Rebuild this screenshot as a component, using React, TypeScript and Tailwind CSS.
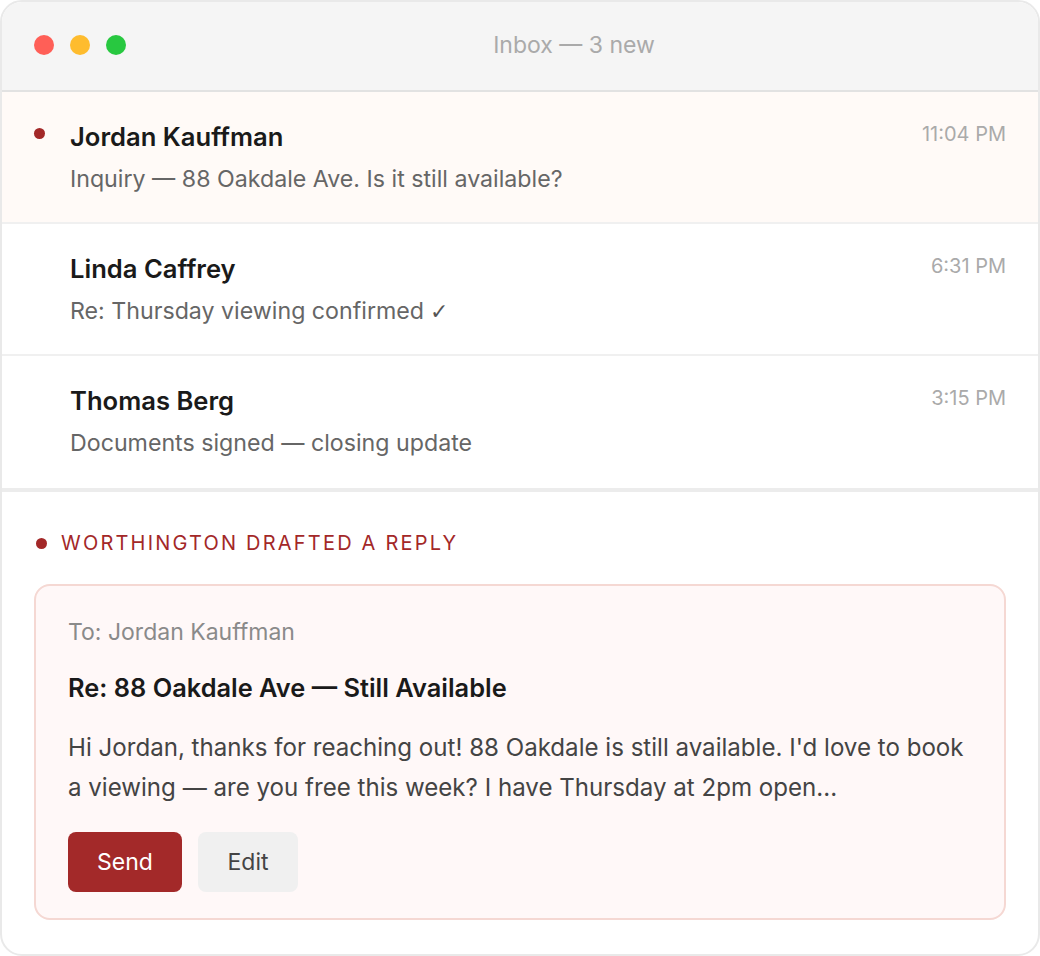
const messages = [
  { name: 'Jordan Kauffman', subject: 'Inquiry — 88 Oakdale Ave. Is it still available?', time: '11:04 PM', unread: true, check: false },
  { name: 'Linda Caffrey', subject: 'Re: Thursday viewing confirmed', time: '6:31 PM', unread: false, check: true },
  { name: 'Thomas Berg', subject: 'Documents signed — closing update', time: '3:15 PM', unread: false, check: false },
];

export default function App() {
  return (
    <div className="w-[1040px] h-[956px] bg-white" style={{ fontFamily: 'Inter, "Noto Sans", sans-serif' }}>
      <div className="h-full rounded-[22px] border-2 border-[#e9e9e9] overflow-hidden flex flex-col bg-white">
        {/* Title bar */}
        <div className="h-[90px] shrink-0 bg-[#f5f5f5] border-b-2 border-[#e2e2e2] flex items-center px-8 pb-[2px] gap-4">
          <div className="flex gap-4">
            <span className="w-5 h-5 rounded-full bg-[#ff5f57]" />
            <span className="w-5 h-5 rounded-full bg-[#febc2e]" />
            <span className="w-5 h-5 rounded-full bg-[#28c840]" />
          </div>
          <div className="flex-1 text-center text-[23px] leading-[30px] text-[#aaaaaa]">Inbox — 3 new</div>
        </div>

        {/* Message list */}
        <div className="border-b-4 border-[#ececec]">
          {messages.map((m, i) => (
            <div
              key={m.name}
              className={`h-[132px] flex px-8 pt-[28px] ${m.unread ? 'bg-[#fffaf7]' : 'bg-white'} ${i < messages.length - 1 ? 'border-b-2 border-[#f0f0f0]' : ''}`}
            >
              <div className="w-[36px] shrink-0 pt-[8px]">
                {m.unread && <span className="block w-[11px] h-[11px] rounded-full bg-[#a32828]" />}
              </div>
              <div className="flex-1 flex flex-col">
                <div className="text-[25.6px] leading-[34px] font-semibold text-[#1a1a1a]">{m.name}</div>
                <div className="mt-[10px] text-[23.2px] leading-[30px] text-[#666666]">
                  {m.subject}
                  {m.check && (
                    <span className="ml-[6px] text-[22px] text-[#555555]" style={{ fontFamily: '"DejaVu Sans", sans-serif' }}>✓</span>
                  )}
                </div>
              </div>
              <div className="text-[20px] leading-[28px] text-[#aaaaaa]">{m.time}</div>
            </div>
          ))}
        </div>

        {/* Draft */}
        <div className="flex-1 px-8 pt-[37px]">
          <div className="flex items-center gap-[14px] pl-[2px]">
            <span className="w-[11px] h-[11px] rounded-full bg-[#a32828]" />
            <span className="text-[20px] leading-[28px] tracking-[0.11em] text-[#a32828] uppercase">Worthington drafted a reply</span>
          </div>
          <div className="mt-[27px] rounded-2xl border-2 border-[#f5d8d3] bg-[#fff8f8] px-[32px] pt-[31px] pb-[26px]">
            <div className="text-[23px] leading-[30px] text-[#8a8a8a]">To: Jordan Kauffman</div>
            <div className="mt-[26px] text-[25.4px] leading-[30px] font-semibold text-[#1a1a1a]">Re: 88 Oakdale Ave — Still Available</div>
            <p className="mt-[25px] text-[24.1px] leading-[40px] text-[#444444] whitespace-nowrap">
              Hi Jordan, thanks for reaching out! 88 Oakdale is still available. I'd love to book
              <br />
              a viewing — are you free this week? I have Thursday at 2pm open...
            </p>
            <div className="mt-[24px] flex gap-4">
              <button className="h-[60px] w-[114px] rounded-lg bg-[#a32929] text-white text-[23px]">Send</button>
              <button className="h-[60px] w-[100px] rounded-lg bg-[#f0f0f0] text-[#444444] text-[23px]">Edit</button>
            </div>
          </div>
        </div>
      </div>
    </div>
  );
}
